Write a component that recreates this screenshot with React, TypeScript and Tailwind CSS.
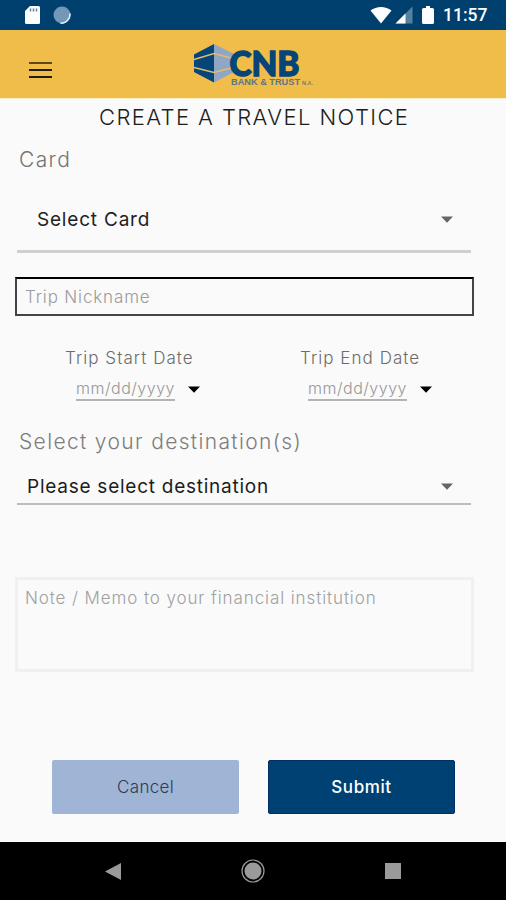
import { useState } from 'react';

const StatusBar = () => (
  <div className="flex h-[30px] items-center bg-[#00406f]">
    <svg className="ml-6 h-5 w-[17px]" viewBox="0 0 17 20">
      <path d="M6 1h8.500a1.500 1.500 0 0 1 1.500 1.500v15a1.500 1.500 0 0 1-1.500 1.500h-12a1.500 1.500 0 0 1-1.500-1.500V6z" fill="#fff" />
      <path d="M6.500 3.500v3M9.500 3.500v3M12.500 3.500v3" stroke="#5f7fa5" strokeWidth="1.500" />
    </svg>
    <svg className="ml-3 h-[18px] w-[18px]" viewBox="0 0 18 18">
      <circle cx="9" cy="9" r="8.500" fill="#7397b8" />
      <path d="M17 7.500A8.500 8.500 0 0 1 7.500 17.300 10 10 0 0 0 17 7.500z" fill="#e4edf6" stroke="#e4edf6" />
    </svg>
    <svg className="ml-auto h-[18px] w-[22px]" viewBox="0 0 22 18">
      <path d="M11 17.500L.500 4.500C6.500-.300 15.500-.300 21.500 4.500z" fill="#fff" />
    </svg>
    <svg className="ml-[3px] h-[18px] w-[18px]" viewBox="0 0 18 18">
      <path d="M17.500.500v17H.500z" fill="#53819f" />
      <path d="M10.500 7.500v10H.500z" fill="#fff" />
    </svg>
    <svg className="ml-[9px] h-5 w-3" viewBox="0 0 12 20">
      <path d="M4 1h4v2h2.500A1.500 1.500 0 0 1 12 4.500v13a1.500 1.500 0 0 1-1.500 1.500h-9A1.500 1.500 0 0 1 0 17.500v-13A1.500 1.500 0 0 1 1.500 3H4z" fill="#fff" />
    </svg>
    <span className="ml-[9px] w-[63px] pt-0.5 font-[Roboto] text-[17.5px] leading-none font-medium text-white">11:57</span>
  </div>
);

const Logo = () => (
  <svg className="h-[46px] w-[122px]" viewBox="0 0 122 46">
    <path d="M1 11.500L21 1v38.500L1 29z" fill="#064578" />
    <path d="M21 1l20 10v18L21 39.500z" fill="#91a5c4" />
    <path d="M1 16.500L21 10.500l19 5M1 24.500L21 29.500l19-5" fill="none" stroke="#dfbd6c" strokeWidth="1.600" />
    <text x="36.500" y="32.500" fill="#064578" stroke="#064578" strokeWidth="1.400" fontFamily="Lato" fontWeight="900" fontSize="34" textLength="70" lengthAdjust="spacingAndGlyphs">CNB</text>
    <text x="38" y="42" fill="#5c7486" fontFamily="Liberation Sans" fontWeight="700" fontSize="8.500" textLength="69" lengthAdjust="spacingAndGlyphs">BANK &amp; TRUST</text>
    <text x="109" y="42" fill="#77805f" fontFamily="Liberation Sans" fontWeight="700" fontSize="4.500" textLength="11" lengthAdjust="spacingAndGlyphs">N.A.</text>
  </svg>
);

const Caret = ({ className }: { className: string }) => (
  <svg className={className} viewBox="0 0 12 7">
    <path d="M0 0.500h12L6 6.800z" fill="currentColor" />
  </svg>
);

const DateField = ({ label, buttonClass }: { label: string; buttonClass: string }) => (
  <div className="w-[235px] shrink-0">
    <p className="h-5 text-[17px] leading-[21px] tracking-[1.05px] whitespace-nowrap text-[#6c6c6c]">{label}</p>
    <button type="button" className={`mt-[9px] flex items-center ${buttonClass}`}>
      <span className="h-6 w-[99px] border-b-2 border-[#b3b3b3] text-left text-[16px] leading-[22px] tracking-[0.5px] whitespace-nowrap text-[#979797]">
        mm/dd/yyyy
      </span>
      <Caret className="ml-[13px] h-[7px] w-3 text-black" />
    </button>
  </div>
);

const App = () => {
  const [nickname, setNickname] = useState('');
  const [note, setNote] = useState('');

  return (
    <div className="flex h-[900px] w-[506px] flex-col overflow-hidden bg-[#fafafa] font-[Inter,sans-serif] font-light">
      <StatusBar />
      <header className="flex h-[69px] items-start border-b border-[#fff0c4] bg-[#f1bd4a]">
        <button type="button" className="mt-8 ml-[29px] flex w-[23px] flex-col gap-[5px]">
          <span className="h-0.5 bg-[#5b4a14]" />
          <span className="h-0.5 bg-[#241c0c]" />
          <span className="h-0.5 bg-[#241c0c]" />
        </button>
        <div className="mt-[13px] ml-[141px]">
          <Logo />
        </div>
      </header>

      <form className="flex flex-1 flex-col" onSubmit={(e) => e.preventDefault()}>
        <h1 className="ml-[99px] h-[37px] text-[22px] leading-[37px] tracking-[1.4px] whitespace-nowrap text-[#1d1d1d]">CREATE A TRAVEL NOTICE</h1>
        <label className="ml-[19px] h-12 text-[21px] leading-12 tracking-[1.4px] text-[#747474]">Card</label>
        <button type="button" className="mr-[35px] ml-[17px] flex h-[69px] items-center justify-between border-b-[3px] border-[#cfcfcf] pt-1 pr-[18px] pl-5">
          <span className="pt-0.5 text-[19px] font-normal tracking-[0.8px] text-[#222]">Select Card</span>
          <Caret className="h-[7px] w-3 text-[#666]" />
        </button>
        <input
          type="text"
          value={nickname}
          onChange={(e) => setNickname(e.target.value)}
          placeholder="Trip Nickname"
          className="mt-6 ml-[15px] h-[39px] w-[459px] border-2 border-[#444] border-t-black px-2 text-[17px] tracking-[0.85px] placeholder:text-[#9b9b9b]"
        />

        <div className="mt-8 flex pl-[65px]">
          <DateField label="Trip Start Date" buttonClass="ml-[11px]" />
          <DateField label="Trip End Date" buttonClass="ml-2" />
        </div>

        <label className="mt-4 ml-[19px] h-12 text-[21px] leading-[50px] tracking-[1.35px] text-[#7d7d7d]">Select your destination(s)</label>
        <button type="button" className="mr-[35px] ml-[17px] flex h-10 items-center justify-between border-b-2 border-[#bdbdbd] pt-1 pr-[18px] pl-[10px]">
          <span className="pt-0.5 text-[19px] font-normal tracking-[0.75px] text-[#1c1c1c]">Please select destination</span>
          <Caret className="h-[7px] w-3 text-[#666]" />
        </button>
        <textarea
          value={note}
          onChange={(e) => setNote(e.target.value)}
          placeholder="Note / Memo to your financial institution"
          className="mt-[72px] ml-[15px] h-[95px] w-[459px] resize-none border-[3px] border-[#f0f0f0] px-[7px] py-2 text-[17px] leading-5 tracking-[0.9px] placeholder:text-[#a0a0a0]"
        />

        <div className="mt-auto mb-7 ml-[52px] flex gap-[29px]">
          <button type="button" className="h-[54px] w-[187px] rounded-xs bg-[#a0b4d5] pt-0.5 text-[17px] tracking-[0.3px] text-[#2c3c55]">Cancel</button>
          <button type="submit" className="h-[54px] w-[187px] rounded-xs border border-[#003064] bg-[#004173] pt-0.5 text-[17px] font-medium tracking-[0.6px] text-white">Submit</button>
        </div>
      </form>

      <nav className="flex h-[58px] items-center justify-between bg-black px-[105px] text-[#9a9a9a]">
        <svg className="h-[17px] w-4" viewBox="0 0 16 17">
          <path d="M0 8.500L16 0v17z" fill="currentColor" />
        </svg>
        <svg className="h-6 w-6" viewBox="0 0 24 24">
          <circle cx="12" cy="12" r="11" fill="none" stroke="currentColor" strokeWidth="1.200" />
          <circle cx="12" cy="12" r="8.500" fill="currentColor" />
        </svg>
        <span className="h-4 w-4 bg-current" />
      </nav>
    </div>
  );
};

export default App;
